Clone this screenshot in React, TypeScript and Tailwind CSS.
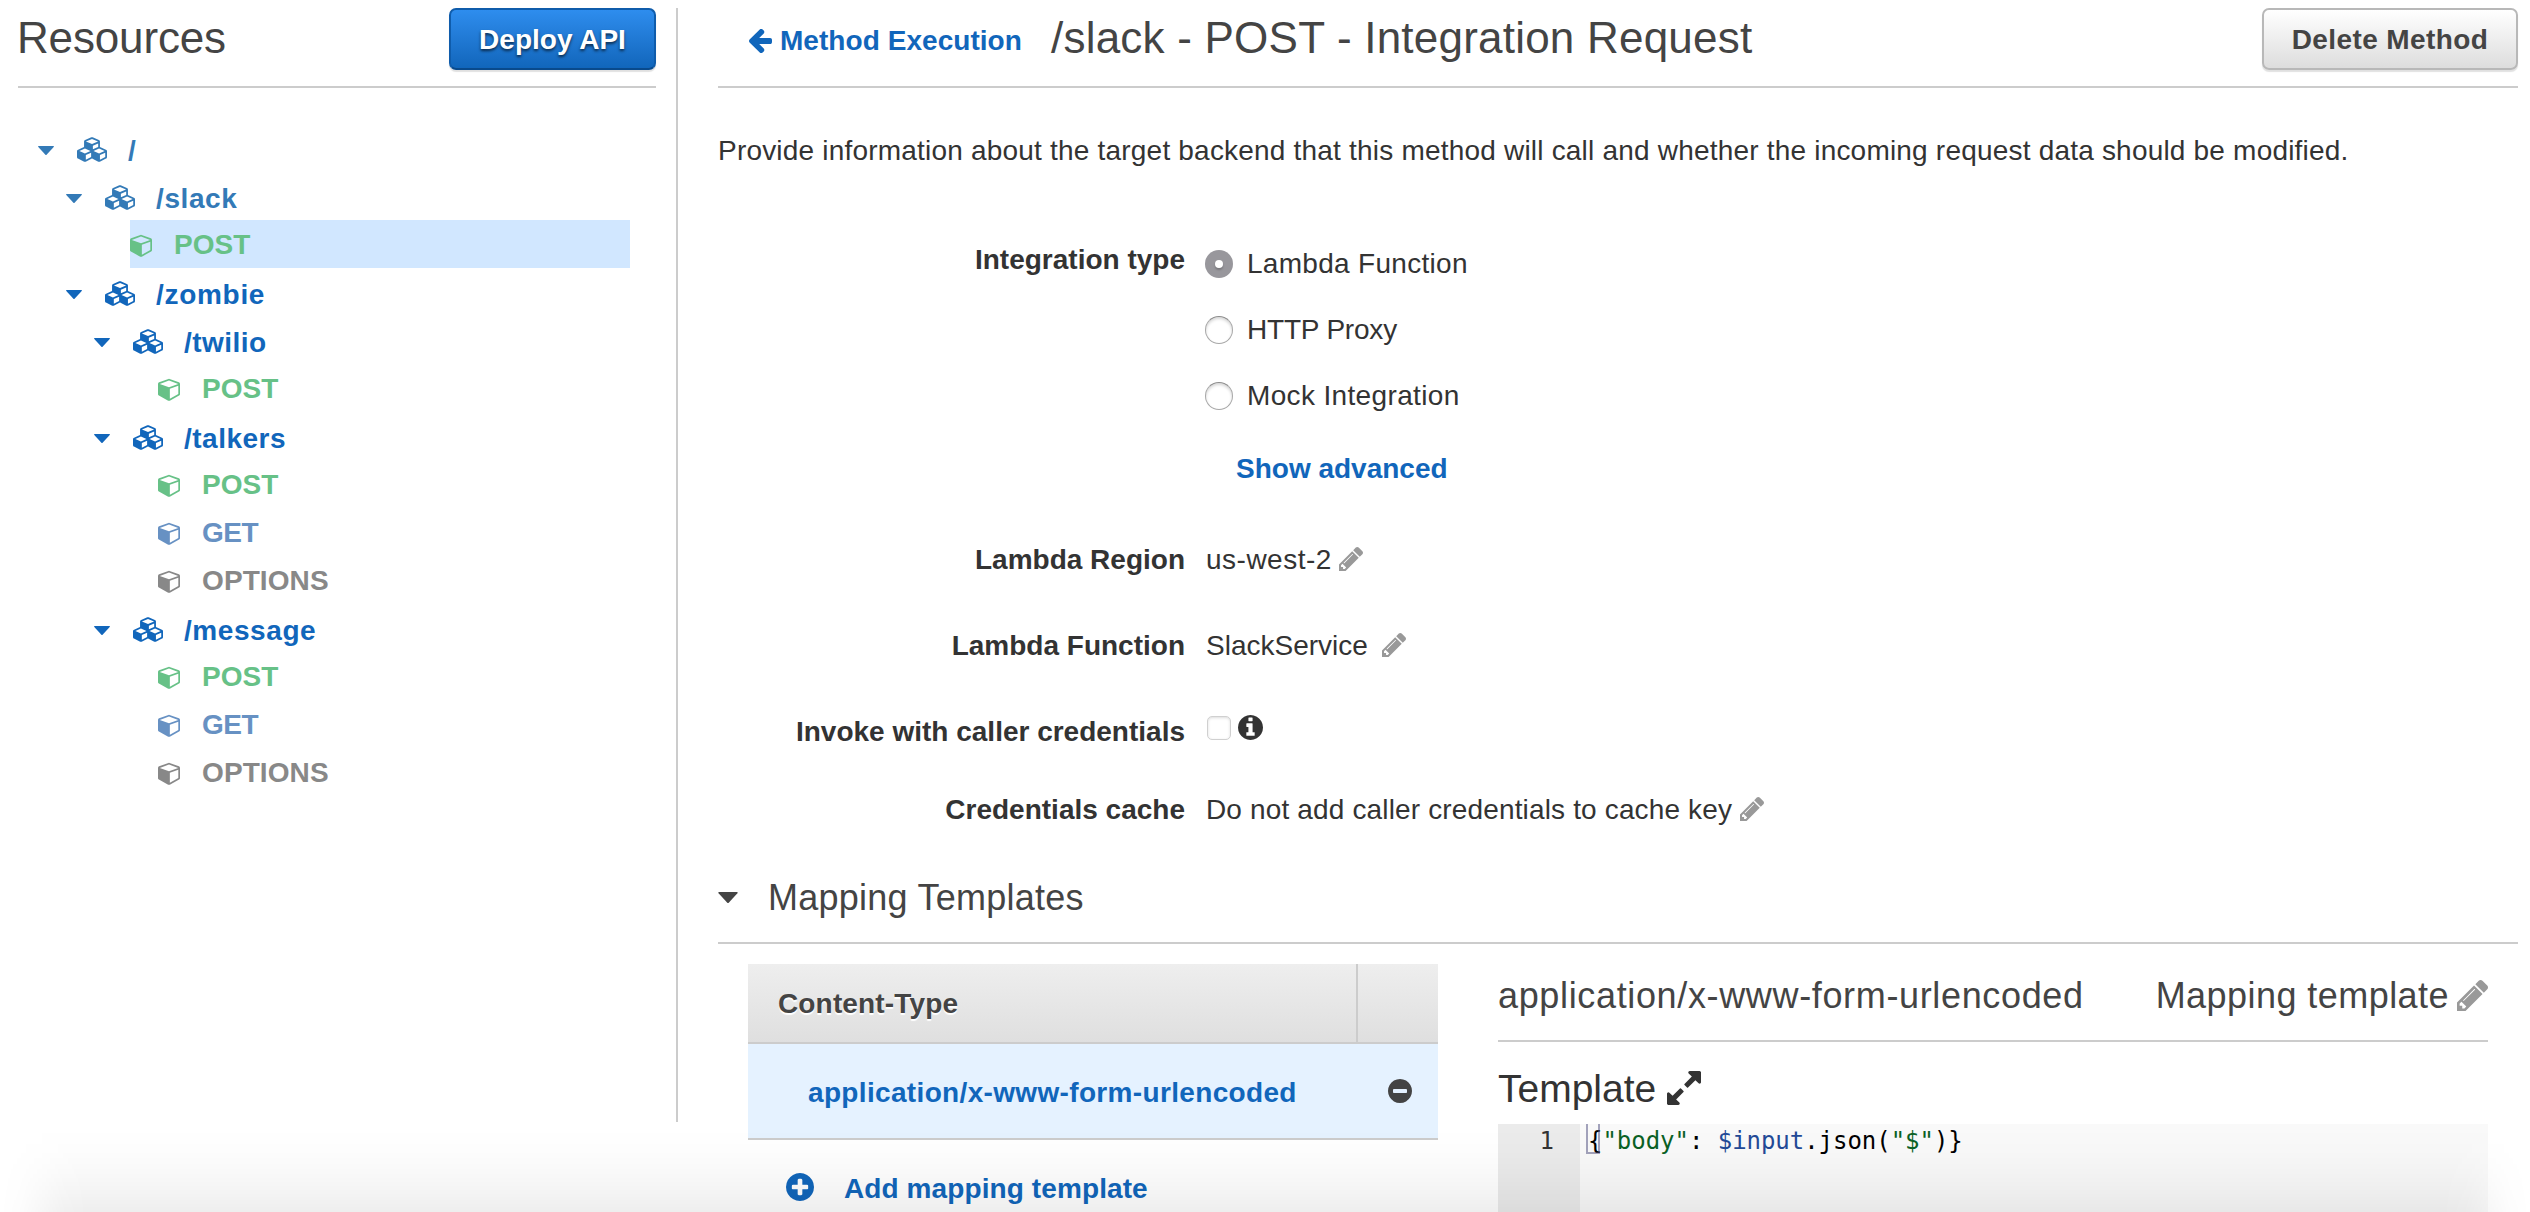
import React from "react";

type IconProps = { className?: string };

const DISC =
  "m320-64q0 209-103 385.5t-279.5 279.5-385.5 103-385.5-103-279.5-279.5-103-385.5 103-385.5 279.5-279.5 385.5-103 385.5 103 279.5 279.5 103 385.5z";

function Glyph({ box, d, className = "" }: IconProps & { box: string; d: string }) {
  return (
    <svg viewBox={box} fill="currentColor" className={`shrink-0 ${className}`} aria-hidden="true">
      <path d={d} />
    </svg>
  );
}

const Cube = ({ className }: IconProps) => (
  <Glyph
    className={className}
    box="0 0 1664 1792"
    d="M896 1629l640-349v-636l-640 233v752zm-64-865l698-254-698-254-698 254zm832-252v768q0 35-18 65t-49 47l-704 384q-28 16-61 16t-61-16l-704-384q-31-17-49-47t-18-65v-768q0-40 23-73t61-47l704-256q22-8 44-8t44 8l704 256q38 14 61 47t23 73z"
  />
);

const Cubes = ({ className }: IconProps) => (
  <Glyph
    className={className}
    box="0 0 2176 1792"
    d="M640 1632l384-192v-314l-384 164v342zm-64-454l404-173-404-173-404 173zm1088 454l384-192v-314l-384 164v342zm-64-454l404-173-404-173-404 173zm-448-293l384-165v-266l-384 164v267zm-64-379l441-189-441-189-441 189zm1088 518v416q0 36-19 67t-52 47l-448 224q-25 14-57 14t-57-14l-448-224q-5-2-7-4-2 2-7 4l-448 224q-25 14-57 14t-57-14l-448-224q-33-16-52-47t-19-67v-416q0-38 21.5-70t56.5-48l434-186v-400q0-38 21.5-70t56.5-48l448-192q23-10 50-10t50 10l448 192q35 16 56.5 48t21.5 70v400l434 186q36 16 57 48t21 70z"
  />
);

const Caret = ({ className }: IconProps) => (
  <Glyph className={className} box="0 0 16 9" d="M0.6 0H15.4Q16.3 0.3 15.7 1L8.6 8.7Q8 9.2 7.4 8.7L0.3 1Q-0.3 0.3 0.6 0Z" />
);

const Pencil = ({ className }: IconProps) => (
  <Glyph
    className={className}
    box="128 149 1515 1515"
    d="M491 1536l91-91-235-235-91 91v107h128v128h107zm523-928q0-22-22-22-10 0-17 7l-542 542q-7 7-7 17 0 22 22 22 10 0 17-7l542-542q7-7 7-17zm-54-192l416 416-832 832h-416v-416zm683 96q0 53-37 90l-166 166-416-416 166-165q36-38 90-38 53 0 91 38l235 234q37 39 37 91z"
  />
);

const ArrowLeft = ({ className }: IconProps) => (
  <Glyph
    className={className}
    box="0 -40 1536 1490"
    d="M1536 640v128q0 53-32.5 90.5t-84.5 37.5h-704l293 294q38 36 38 90t-38 90l-75 76q-37 37-90 37-52 0-91-37l-651-652q-37-37-37-90 0-52 37-91l651-650q38-38 91-38 52 0 90 38l75 74q38 38 38 91t-38 91l-293 293h704q52 0 84.5 37.5t32.5 90.5z"
  />
);

const Info = ({ className }: IconProps) => (
  <Glyph
    className={className}
    box="128 128 1536 1536"
    d="M1152 1376v-160q0-14-9-23t-23-9h-96v-512q0-14-9-23t-23-9h-320q-14 0-23 9t-9 23v160q0 14 9 23t23 9h96v320h-96q-14 0-23 9t-9 23v160q0 14 9 23t23 9h448q14 0 23-9t9-23zm-128-896v-160q0-14-9-23t-23-9h-192q-14 0-23 9t-9 23v160q0 14 9 23t23 9h192q14 0 23-9t9-23zm640 416q0 209-103 385.5t-279.5 279.5-385.5 103-385.5-103-279.5-279.5-103-385.5 103-385.5 279.5-279.5 385.5-103 385.5 103 279.5 279.5 103 385.5z"
  />
);

const PlusCircle = ({ className }: IconProps) => (
  <Glyph
    className={className}
    box="128 128 1536 1536"
    d={
      "M1344 960v-128q0-26-19-45t-45-19h-256v-256q0-26-19-45t-45-19h-128q-26 0-45 19t-19 45v256h-256q-26 0-45 19t-19 45v128q0 26 19 45t45 19h256v256q0 26 19 45t45 19h128q26 0 45-19t19-45v-256h256q26 0 45-19t19-45z" +
      DISC
    }
  />
);

const MinusCircle = ({ className }: IconProps) => (
  <Glyph
    className={className}
    box="128 128 1536 1536"
    d={"M1344 960v-128q0-26-19-45t-45-19h-768q-26 0-45 19t-19 45v128q0 26 19 45t45 19h768q26 0 45-19t19-45z" + DISC}
  />
);

const Expand = ({ className }: IconProps) => (
  <Glyph
    className={className}
    box="128 128 1536 1536"
    d="M883 1056q0 13-10 23l-332 332 144 144q19 19 19 45t-19 45-45 19h-448q-26 0-45-19t-19-45v-448q0-26 19-45t45-19 45 19l144 144 332-332q10-10 23-10t23 10l114 114q10 10 10 23zm781-864v448q0 26-19 45t-45 19-45-19l-144-144-332 332q-10 10-23 10t-23-10l-114-114q-10-10-10-23t10-23l332-332-144-144q-19-19-19-45t19-45 45-19h448q26 0 45 19t19 45z"
  />
);

function Folder({ name, indent, color = "text-[#1166bb]", spacing = "" }: { name: string; indent: string; color?: string; spacing?: string }) {
  return (
    <li className={`flex h-12 items-center ${indent} ${color}`}>
      <Caret className="mt-[5px] h-[9px] w-4" />
      <Cubes className="mt-[3px] ml-[23px] h-[25px] w-[30px]" />
      <span className={`ml-[21px] pt-[5px] font-bold whitespace-pre ${spacing}`}>{name}</span>
    </li>
  );
}

const METHODS = {
  POST: "text-[#67c187]",
  GET: "text-[#6791c3] tracking-[-0.5px]",
  OPTIONS: "text-[#888888] tracking-[0.1px]",
};

function Method({ name, indent = "ml-[140px]", active = false }: { name: keyof typeof METHODS; indent?: string; active?: boolean }) {
  return (
    <li className={`flex h-12 items-center ${indent} ${METHODS[name]} ${active ? "mr-[26px] bg-[#d1e7ff]" : ""}`}>
      <Cube className="mt-px h-6 w-[22px]" />
      <span className="ml-[22px] pt-[2px] font-bold">{name}</span>
    </li>
  );
}

function Radio({ label, checked = false, spacing }: { label: string; checked?: boolean; spacing: string }) {
  return (
    <label className="flex h-[66px] items-center">
      {checked ? (
        <span className="flex size-7 items-center justify-center rounded-full bg-[#98979c]">
          <span className="size-2 rounded-full bg-white shadow-[0_2px_2px_rgba(0,0,0,0.2)]" />
        </span>
      ) : (
        <span className="size-7 rounded-full border border-[#a8a8a8] border-t-[#8c8c8c] bg-white shadow-[inset_0_2px_3px_rgba(0,0,0,0.16)]" />
      )}
      <span className={`ml-[14px] pb-px ${spacing}`}>{label}</span>
    </label>
  );
}

function Field({ label, height, children }: { label: string; height: string; children: React.ReactNode }) {
  return (
    <div className={`flex items-center ${height}`}>
      <span className="w-[467px] shrink-0 pt-[2px] text-right font-bold">{label}</span>
      <div className="ml-[21px] flex items-center">{children}</div>
    </div>
  );
}

export default function App() {
  return (
    <div className="relative flex h-[1212px] w-full overflow-hidden bg-white font-['Liberation_Sans',Arial,sans-serif] text-[28px] leading-[40px] whitespace-nowrap text-[#333333]">
      <aside className="w-[656px] shrink-0 pl-[18px]">
        <header className="flex h-[88px] items-start justify-between border-b-2 border-[#cccccc] pt-2">
          <h1 className="-ml-px text-[44px] leading-[59px] tracking-[-0.16px] text-[#444444]">Resources</h1>
          <button className="h-[62px] w-[207px] rounded-[7px] border-2 border-[#0f5cab] border-b-[#094a8c] bg-linear-to-b from-[#2e8dee] to-[#1166bb] pt-[2px] font-bold text-white shadow-[0_2px_1px_rgba(0,0,0,0.12)] [text-shadow:0_2px_3px_rgba(0,0,0,0.65)]">
            Deploy API
          </button>
        </header>
        <ul className="mt-9">
          <Folder name="/" indent="ml-5" color="text-[#337ab7]" />
          <Folder name="/slack" indent="ml-12" color="text-[#337ab7]" spacing="tracking-[0.6px]" />
          <Method name="POST" indent="ml-[112px]" active />
          <Folder name="/zombie" indent="ml-12" spacing="tracking-[0.7px]" />
          <Folder name="/twilio" indent="ml-[76px]" spacing="tracking-[0.45px]" />
          <Method name="POST" />
          <Folder name="/talkers" indent="ml-[76px]" spacing="tracking-[0.5px]" />
          <Method name="POST" />
          <Method name="GET" />
          <Method name="OPTIONS" />
          <Folder name="/message" indent="ml-[76px]" spacing="tracking-[0.57px]" />
          <Method name="POST" />
          <Method name="GET" />
          <Method name="OPTIONS" />
        </ul>
      </aside>

      <div className="mt-2 ml-5 h-[1114px] w-[2px] shrink-0 bg-[#cccccc]" />

      <main className="ml-10 w-[1800px] shrink-0">
        <header className="flex h-[88px] items-start border-b-2 border-[#cccccc] pt-2">
          <a className="ml-[30px] flex h-[62px] w-[303px] items-center pt-[3px] font-bold tracking-[0.05px] text-[#1166bb]">
            <ArrowLeft className="mr-2 h-6 w-[24px]" />
            Method Execution
          </a>
          <h1 className="text-[44px] leading-[59px] tracking-[0.22px] text-[#444444]">/slack - POST - Integration Request</h1>
          <button className="ml-auto h-[62px] w-[256px] rounded-[7px] border-2 border-[#b8b8b8] bg-linear-to-b from-white to-[#dddddd] pt-[2px] font-bold tracking-[0.4px] text-[#444444] shadow-[0_2px_1px_rgba(0,0,0,0.12)]">
            Delete Method
          </button>
        </header>

        <p className="mt-[43px] tracking-[0.2px]">
          Provide information about the target backend that this method will call and whether the incoming request data should be modified.
        </p>

        <section className="mt-[60px]">
          <div className="flex">
            <span className="mt-2 w-[467px] shrink-0 pt-px text-right font-bold">Integration type</span>
            <div className="ml-5">
              <Radio label="Lambda Function" checked spacing="tracking-[0.3px]" />
              <Radio label="HTTP Proxy" spacing="tracking-[-0.2px]" />
              <Radio label="Mock Integration" spacing="tracking-[0.35px]" />
              <a className="mt-[10px] ml-[31px] block leading-[60px] font-bold text-[#1166bb]">Show advanced</a>
            </div>
          </div>
          <div className="mt-[17px]">
            <Field label="Lambda Region" height="h-[86px]">
              <span className="pt-[2px] tracking-[0.5px]">us-west-2</span>
              <Pencil className="ml-[7px] size-6 text-[#999999]" />
            </Field>
            <Field label="Lambda Function" height="h-[86px]">
              <span className="pt-[2px]">SlackService</span>
              <Pencil className="ml-[14px] size-6 text-[#999999]" />
            </Field>
            <Field label="Invoke with caller credentials" height="h-[86px]">
              <span className="mb-[6px] ml-px size-6 rounded-[5px] border border-[#d0d0d0] bg-white shadow-[inset_0_1px_3px_rgba(0,0,0,0.14)]" />
              <Info className="mb-2 ml-[7px] size-[25px] text-[#333333]" />
            </Field>
            <Field label="Credentials cache" height="h-[70px]">
              <span className="pt-[2px] tracking-[0.15px]">Do not add caller credentials to cache key</span>
              <Pencil className="ml-2 size-6 text-[#999999]" />
            </Field>
          </div>
        </section>

        <section>
          <h2 className="flex h-[100px] items-center border-b-2 border-[#cccccc] pt-[9px] text-[36px] tracking-[0.25px] text-[#444444]">
            <Caret className="h-[11px] w-5" />
            <span className="ml-[30px]">Mapping Templates</span>
          </h2>

          <div className="flex">
            <div className="mt-5 ml-[30px] w-[690px] shrink-0">
              <div className="flex h-20 border-b-2 border-[#cccccc] bg-linear-to-b from-[#eeeeee] to-[#dfdfdf] font-bold text-[#444444]">
                <div className="flex w-[608px] items-center pt-[2px] pl-[30px] tracking-[0.15px] [text-shadow:0_2px_1px_#ffffff]">Content-Type</div>
                <div className="grow border-l-2 border-[#cccccc]" />
              </div>
              <div className="flex h-24 items-center border-b-2 border-[#cccccc] bg-[#e5f2ff]">
                <a className="ml-[60px] grow pt-[3px] font-bold tracking-[0.34px] text-[#1166bb]">application/x-www-form-urlencoded</a>
                <MinusCircle className="mr-[26px] size-6 text-[#444444]" />
              </div>
              <a className="flex h-24 items-center pl-[38px] font-bold tracking-[0.1px] text-[#1166bb]">
                <PlusCircle className="mb-[3px] size-7" />
                <span className="ml-[30px] pt-[2px]">Add mapping template</span>
              </a>
            </div>

            <div className="ml-[60px] w-[990px] shrink-0">
              <h3 className="flex h-[98px] items-center border-b-2 border-[#cccccc] pt-[7px] text-[36px] text-[#444444]">
                <span className="tracking-[0.65px]">application/x-www-form-urlencoded</span>
                <span className="ml-auto tracking-[0.45px]">Mapping template</span>
                <Pencil className="ml-2 size-[31px] text-[#999999]" />
              </h3>
              <div className="flex h-[82px] items-center pt-[11px] text-[39px]">
                Template
                <Expand className="mb-px ml-[11px] size-[34px]" />
              </div>
              <div className="flex h-[120px] bg-[#f9f9f9] font-['DejaVu_Sans_Mono',Menlo,monospace] text-[24px] leading-[35px] text-black">
                <div className="w-[82px] bg-[#ebebeb] pr-[26px] text-right text-[#333333]">1</div>
                <div className="relative pl-2 tracking-[-0.04px] whitespace-pre">
                  <span className="absolute top-0 left-[6px] h-[30px] w-[14px] border-2 border-t-0 border-[#4b4b7e]/50" />
                  {"{"}
                  <span className="text-[#0b6125]">"body"</span>
                  {": "}
                  <span className="text-[#234a97]">$input</span>
                  {".json("}
                  <span className="text-[#0b6125]">"$"</span>
                  {")}"}
                </div>
              </div>
            </div>
          </div>
        </section>
      </main>

      <div className="pointer-events-none absolute inset-x-0 bottom-0 h-[85px] bg-[linear-gradient(to_top,rgba(0,0,0,0.068)_0px,rgba(0,0,0,0.044)_20px,rgba(0,0,0,0.022)_40px,rgba(0,0,0,0.008)_62px,rgba(0,0,0,0)_85px)] [mask-image:linear-gradient(to_right,transparent_0px,rgba(0,0,0,0.15)_20px,rgba(0,0,0,0.85)_64px,black_88px,black_calc(100%-88px),rgba(0,0,0,0.85)_calc(100%-64px),rgba(0,0,0,0.15)_calc(100%-20px),transparent_100%)]" />
    </div>
  );
}
